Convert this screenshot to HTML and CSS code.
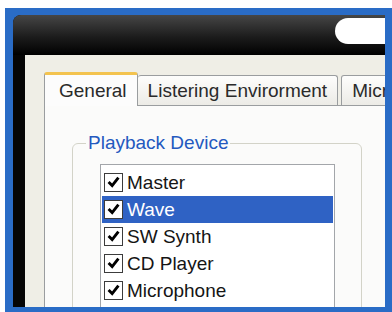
FILE: index.html
```html
<!doctype html>
<html>
	<head>
		<link rel="stylesheet" href="styles.css">
	</head>
	<body>
		<div class="frame">
			<div class="window">
				<div class="titlebar">
					<div class="search"></div>
				</div>
				<div class="client">
					<div class="tabs">
						<div class="tab active">General</div>
						<div class="tab">Listering Envirorment</div>
						<div class="tab">Microphone</div>
					</div>
					<div class="panel">
						<fieldset class="group">
							<legend>Playback Device</legend>
							<div class="listbox">
								<div class="item"><span class="check"><svg viewBox="0 0 19 19" width="17" height="17"><polyline points="4,9 8,13 15,4" /></svg></span>Master</div>
								<div class="item selected"><span class="check"><svg viewBox="0 0 19 19" width="17" height="17"><polyline points="4,9 8,13 15,4" /></svg></span>Wave</div>
								<div class="item"><span class="check"><svg viewBox="0 0 19 19" width="17" height="17"><polyline points="4,9 8,13 15,4" /></svg></span>SW Synth</div>
								<div class="item"><span class="check"><svg viewBox="0 0 19 19" width="17" height="17"><polyline points="4,9 8,13 15,4" /></svg></span>CD Player</div>
								<div class="item"><span class="check"><svg viewBox="0 0 19 19" width="17" height="17"><polyline points="4,9 8,13 15,4" /></svg></span>Microphone</div>
							</div>
						</fieldset>
					</div>
				</div>
			</div>
		</div>
	</body>
</html>
```

FILE: styles.css
```css
html, body {
	margin: 0;
	width: 392px;
	height: 312px;
	overflow: hidden;
	background: #fff;
	font-family: "Liberation Sans", Arial, sans-serif;
}

.frame {
	margin: 8px 0 0 5px;
	height: 304px;
	box-sizing: border-box;
	padding: 7px 7px 5px 8px;
	background: #2a6cc6;
}

.window {
	height: 100%;
	display: flex;
	flex-direction: column;
	background: #050505;
	border-top-left-radius: 8px;
	overflow: hidden;
}

.titlebar {
	height: 40px;
	flex: none;
	display: flex;
	background: linear-gradient(#464646, #1c1c1c 55%, #000);
}
	.titlebar .search {
		margin: 3px 0 0 auto;
		width: 50px;
		height: 26px;
		background: #fff;
		border-radius: 13px 0 0 13px;
	}

.client {
	flex: 1;
	margin-left: 12px;
	padding: 17px 0 0 19px;
	background: #efeee6;
	display: flex;
	flex-direction: column;
	overflow: hidden;
}

.tabs {
	display: flex;
	align-items: flex-end;
	white-space: nowrap;
}
.tab {
	height: 30px;
	box-sizing: border-box;
	padding: 4px 10px 0 10px;
	line-height: 22px;
	font-size: 19px;
	color: #2a2a2a;
	border: 1px solid #9a9d9f;
	border-bottom: none;
	border-radius: 3px 3px 0 0;
	background: linear-gradient(#fdfdfc, #ecebe6);
}
.tab + .tab {
	margin-left: 3px;
}
.tab.active {
	position: relative;
	z-index: 1;
	height: 34px;
	margin-bottom: -1px;
	padding: 5px 10px 0 14px;
	border-top: 3px solid #f3c34f;
	background: #fcfcfc;
}
.tab.active + .tab {
	margin-left: 0;
	border-left: none;
}

.panel {
	flex: 1;
	background: #fbfbfa;
	border-top: 1px solid #9a9d9f;
	border-left: 1px solid #9a9d9f;
	padding: 26px 0 0 27px;
}

.group {
	margin: 0;
	width: 290px;
	height: 220px;
	box-sizing: border-box;
	padding: 10px 0 0 13px;
	border: 1px solid #d3d3c8;
	border-radius: 6px;
}
	.group legend {
		padding: 0 2px;
		font-size: 19px;
		line-height: 22px;
		color: #2459bf;
	}

.listbox {
	margin-left: 14px;
	width: 235px;
	height: 200px;
	box-sizing: border-box;
	padding: 4px 1px;
	background: #fff;
	border: 1px solid #a3a6aa;
}

.item {
	height: 27px;
	display: flex;
	align-items: center;
	padding-left: 2px;
	font-size: 19px;
	color: #151515;
}
.item.selected {
	background: #2f62c4;
	color: #fff;
}

.check {
	width: 19px;
	height: 19px;
	box-sizing: border-box;
	margin-right: 4px;
	display: flex;
	align-items: center;
	justify-content: center;
	background: #fff;
	border: 1px solid #3c3c3c;
}
	.check polyline {
		fill: none;
		stroke: #000;
		stroke-width: 3.2;
	}
```
